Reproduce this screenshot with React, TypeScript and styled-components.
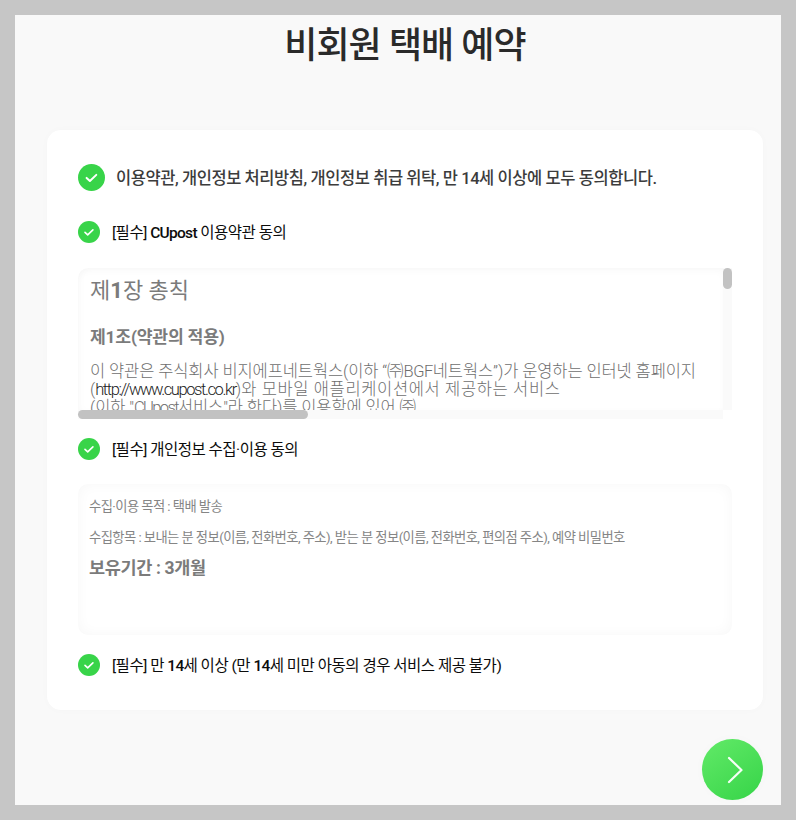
import { createGlobalStyle, styled } from 'styled-components';

const GlobalStyle = createGlobalStyle`
  html, body {
    margin: 0;
    padding: 0;
    background: #c6c6c6;
    font-family: Roboto, "Noto Sans CJK KR", sans-serif;
  }
`;

const Page = styled.div`
  box-sizing: border-box;
  width: 796px;
  height: 820px;
  padding: 15px;
`;

const Panel = styled.main`
  box-sizing: border-box;
  height: 790px;
  padding: 0 18px 0 32px;
  background: #f9f9f9;
  display: flex;
  flex-direction: column;
`;

const Title = styled.h1`
  margin: 0;
  height: 115px;
  padding-top: 6px;
  box-sizing: border-box;
  font-size: 36px;
  line-height: 50px;
  font-weight: 500;
  letter-spacing: -0.9px;
  text-align: center;
  color: #2a2a2a;
`;

const Card = styled.section`
  box-sizing: border-box;
  height: 580px;
  padding: 33px 31px 0;
  background: #fff;
  border-radius: 14px;
  box-shadow: 0 0 8px rgba(0, 0, 0, 0.02);
  display: flex;
  flex-direction: column;
`;

const AgreeRow = styled.div<{ $all?: boolean }>`
  display: flex;
  align-items: center;
  height: ${(p) => (p.$all ? 28 : 22)}px;
  gap: ${(p) => (p.$all ? 11 : 12)}px;
  font-size: ${(p) => (p.$all ? 16.5 : 15.5)}px;
  font-weight: ${(p) => (p.$all ? 500 : 400)};
  letter-spacing: ${(p) => (p.$all ? -0.43 : -0.49)}px;
  color: ${(p) => (p.$all ? '#3c3c3c' : '#0c0c0c')};
`;

const RowLabel = styled.span`
  margin-top: -2px;
`;

const Latin = styled.span`
  font-weight: 500;
  letter-spacing: -0.7px;
`;

const Gap = styled.div<{ $h: number }>`
  height: ${(p) => p.$h}px;
`;

const TermsBox = styled.div`
  position: relative;
  box-sizing: border-box;
  width: 654px;
  height: 151px;
`;

const TermsContent = styled.div`
  box-sizing: border-box;
  width: 645px;
  height: 142px;
  padding: 8px 12px 0;
  overflow: hidden;
  border-radius: 10px 0 0 0;
  box-shadow: inset 0 4px 8px -2px rgba(0, 0, 0, 0.03), inset 4px 0 8px -2px rgba(0, 0, 0, 0.02);
  color: #7b7b7b;
`;

const TrackV = styled.div`
  position: absolute;
  top: 0;
  right: 0;
  width: 9px;
  height: 142px;
  background: #fafafa;
`;

const TrackH = styled.div`
  position: absolute;
  left: 0;
  bottom: 0;
  width: 645px;
  height: 9px;
  background: #fafafa;
`;

const ThumbV = styled.div`
  width: 9px;
  height: 21px;
  border-radius: 5px;
  background: #c2c2c2;
`;

const ThumbH = styled.div`
  width: 230px;
  height: 9px;
  border-radius: 5px;
  background: #c2c2c2;
`;

const ChapterTitle = styled.h2`
  margin: 0;
  font-size: 22px;
  line-height: 29px;
  font-weight: 400;
`;

const ChapterDigit = styled.span`
  font-weight: 700;
`;

const ArticleTitle = styled.h3`
  margin: 20px 0 0;
  font-size: 17.2px;
  line-height: 24px;
  font-weight: 700;
  letter-spacing: -0.2px;
`;

const Paragraph = styled.p`
  margin: 14px 0 0;
  font-size: 16.5px;
  line-height: 18px;
  font-weight: 300;
  letter-spacing: -0.1px;
  color: #6e6e6e;
`;

const Link = styled.span`
  color: #1c1c1c;
  letter-spacing: -1.4px;
`;

const TightLatin = styled.span<{ $amount: number }>`
  letter-spacing: ${(p) => p.$amount}px;
`;

const WideText = styled.span`
  letter-spacing: 0.65px;
`;

const InfoBox = styled.div`
  box-sizing: border-box;
  width: 654px;
  height: 151px;
  padding: 14px 11px;
  border-radius: 10px;
  box-shadow: inset 0 0 14px rgba(0, 0, 0, 0.035);
  color: #858585;
`;

const InfoLine = styled.p`
  margin: 0 0 14px;
  font-size: 13.3px;
  line-height: 17px;
  letter-spacing: -0.57px;
`;

const InfoStrong = styled.strong`
  display: block;
  margin-top: -4px;
  font-size: 17.5px;
  line-height: 24px;
  font-weight: 700;
  letter-spacing: -0.35px;
  color: #7b7b7b;
`;

const Footer = styled.div`
  display: flex;
  justify-content: flex-end;
  padding-top: 29px;
`;

const NextButton = styled.button`
  width: 61px;
  height: 61px;
  padding: 0;
  border: 0;
  border-radius: 50%;
  background: linear-gradient(145deg, #62ea68, #36d448);
  box-shadow: 0 0 12px rgba(0, 0, 0, 0.02);
  display: flex;
  align-items: center;
  justify-content: center;
`;

const Check = ({ size }: { size: number }) => (
  <svg width={size} height={size} viewBox="0 0 27 27" style={{ flex: 'none' }}>
    <circle cx="13.5" cy="13.5" r="13.5" fill="#38d449" />
    <path d="M8.6 13.9l3.3 3.1 6.4-6.1" fill="none" stroke="#fff" strokeWidth="2" strokeLinecap="round" strokeLinejoin="round" />
  </svg>
);

const App = () => (
  <Page>
    <GlobalStyle />
    <Panel>
      <Title>비회원 택배 예약</Title>
      <Card>
        <AgreeRow $all>
          <Check size={27} />
          이용약관, 개인정보 처리방침, 개인정보 취급 위탁, 만 14세 이상에 모두 동의합니다.
        </AgreeRow>
        <Gap $h={30} />
        <AgreeRow>
          <Check size={22} />
          <RowLabel>[필수] <Latin>CUpost</Latin> 이용약관 동의</RowLabel>
        </AgreeRow>
        <Gap $h={25} />
        <TermsBox>
          <TermsContent>
            <ChapterTitle>제<ChapterDigit>1</ChapterDigit>장 총칙</ChapterTitle>
            <ArticleTitle>제1조(약관의 적용)</ArticleTitle>
            <Paragraph>
              이 약관은 주식회사 비지에프네트웍스(이하 “㈜<TightLatin $amount={-0.5}>BGF</TightLatin>네트웍스”)가 운영하는 인터넷 홈페이지
              <br />
              (<Link>http://www.cupost.co.kr</Link>)<WideText>와 모바일 애플리케이션에서 제공하는 서비스</WideText>
              <br />
              (이하 "<TightLatin $amount={-1.6}>CUpost</TightLatin>서비스"라 한다)를 이용함에 있어 ㈜
            </Paragraph>
          </TermsContent>
          <TrackV>
            <ThumbV />
          </TrackV>
          <TrackH>
            <ThumbH />
          </TrackH>
        </TermsBox>
        <Gap $h={19} />
        <AgreeRow>
          <Check size={22} />
          <RowLabel>[필수] 개인정보 수집·이용 동의</RowLabel>
        </AgreeRow>
        <Gap $h={24} />
        <InfoBox>
          <InfoLine>수집·이용 목적 : 택배 발송</InfoLine>
          <InfoLine>수집항목 : 보내는 분 정보(이름, 전화번호, 주소), 받는 분 정보(이름, 전화번호, 편의점 주소), 예약 비밀번호</InfoLine>
          <InfoStrong>보유기간 : 3개월</InfoStrong>
        </InfoBox>
        <Gap $h={19} />
        <AgreeRow>
          <Check size={22} />
          <RowLabel>[필수] 만 <Latin>14</Latin>세 이상 (만 <Latin>14</Latin>세 미만 아동의 경우 서비스 제공 불가)</RowLabel>
        </AgreeRow>
      </Card>
      <Footer>
        <NextButton aria-label="다음">
          <svg width="20" height="30" viewBox="0 0 20 30">
            <path d="M6 3L18.5 15 6 27" fill="none" stroke="#fff" strokeWidth="2.2" strokeLinecap="round" strokeLinejoin="round" opacity="0.95" />
          </svg>
        </NextButton>
      </Footer>
    </Panel>
  </Page>
);

export default App;
